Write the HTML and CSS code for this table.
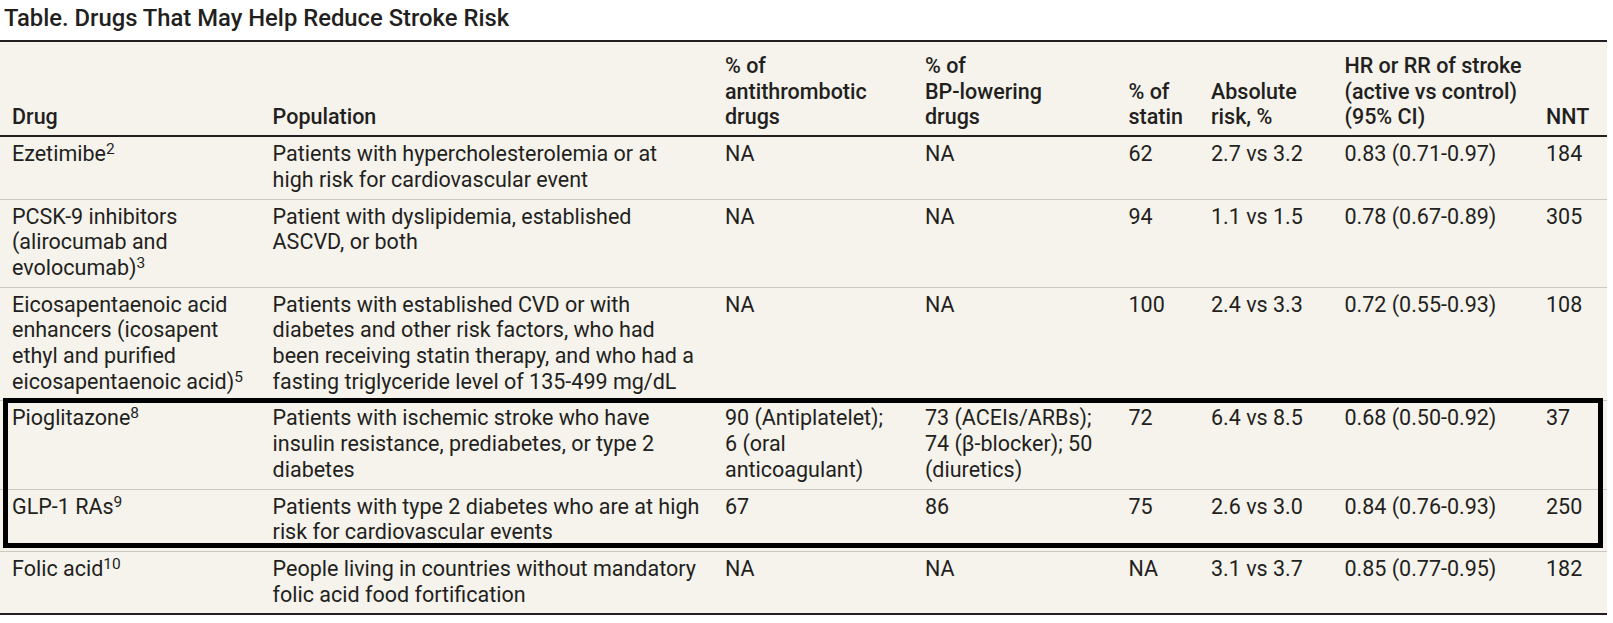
FILE: index.html
```html
<!DOCTYPE html>
<html lang="en">
<head>
<meta charset="utf-8">
<title>Table. Drugs That May Help Reduce Stroke Risk</title>
<link rel="stylesheet" href="styles.css">
</head>
<body>
<div class="figure">
  <h1 class="caption">Table. Drugs That May Help Reduce Stroke Risk</h1>
  <div class="table-wrap">
    <table class="drugs">
      <colgroup>
        <col class="c-drug"><col class="c-pop"><col class="c-anti"><col class="c-bp"><col class="c-statin"><col class="c-abs"><col class="c-hr"><col class="c-nnt">
      </colgroup>
      <thead>
        <tr>
          <th>Drug</th>
          <th>Population</th>
          <th>% of<br>antithrombotic<br>drugs</th>
          <th>% of<br>BP-lowering<br>drugs</th>
          <th>% of<br>statin</th>
          <th>Absolute<br>risk, %</th>
          <th>HR or RR of stroke<br>(active vs control)<br>(95% CI)</th>
          <th>NNT</th>
        </tr>
      </thead>
      <tbody>
        <tr>
          <td>Ezetimibe<sup>2</sup></td>
          <td>Patients with hypercholesterolemia or at<br>high risk for cardiovascular event</td>
          <td>NA</td>
          <td>NA</td>
          <td>62</td>
          <td>2.7 vs 3.2</td>
          <td>0.83 (0.71-0.97)</td>
          <td>184</td>
        </tr>
        <tr>
          <td>PCSK-9 inhibitors<br>(alirocumab and<br>evolocumab)<sup>3</sup></td>
          <td>Patient with dyslipidemia, established<br>ASCVD, or both</td>
          <td>NA</td>
          <td>NA</td>
          <td>94</td>
          <td>1.1 vs 1.5</td>
          <td>0.78 (0.67-0.89)</td>
          <td>305</td>
        </tr>
        <tr>
          <td>Eicosapentaenoic acid<br>enhancers (icosapent<br>ethyl and purified<br>eicosapentaenoic acid)<sup>5</sup></td>
          <td>Patients with established CVD or with<br>diabetes and other risk factors, who had<br>been receiving statin therapy, and who had a<br>fasting triglyceride level of 135-499 mg/dL</td>
          <td>NA</td>
          <td>NA</td>
          <td>100</td>
          <td>2.4 vs 3.3</td>
          <td>0.72 (0.55-0.93)</td>
          <td>108</td>
        </tr>
        <tr>
          <td>Pioglitazone<sup>8</sup></td>
          <td>Patients with ischemic stroke who have<br>insulin resistance, prediabetes, or type 2<br>diabetes</td>
          <td>90 (Antiplatelet);<br>6 (oral<br>anticoagulant)</td>
          <td>73 (ACEIs/ARBs);<br>74 (β-blocker); 50<br>(diuretics)</td>
          <td>72</td>
          <td>6.4 vs 8.5</td>
          <td>0.68 (0.50-0.92)</td>
          <td>37</td>
        </tr>
        <tr>
          <td>GLP-1 RAs<sup>9</sup></td>
          <td>Patients with type 2 diabetes who are at high<br>risk for cardiovascular events</td>
          <td>67</td>
          <td>86</td>
          <td>75</td>
          <td>2.6 vs 3.0</td>
          <td>0.84 (0.76-0.93)</td>
          <td>250</td>
        </tr>
        <tr>
          <td>Folic acid<sup>10</sup></td>
          <td>People living in countries without mandatory<br>folic acid food fortification</td>
          <td>NA</td>
          <td>NA</td>
          <td>NA</td>
          <td>3.1 vs 3.7</td>
          <td>0.85 (0.77-0.95)</td>
          <td>182</td>
        </tr>
      </tbody>
    </table>
    <div class="highlight" aria-hidden="true"></div>
  </div>
</div>
</body>
</html>
```

FILE: styles.css
```css
html, body {
  margin: 0;
  padding: 0;
  background: #ffffff;
}

body {
  font-family: Roboto, "Liberation Sans", sans-serif;
  color: #231f20;
}

.figure {
  width: 1607px;
}

.caption {
  margin: 0;
  height: 40px;
  box-sizing: border-box;
  padding: 5px 0 0 4px;
  font-size: 23.8px;
  line-height: 26px;
  font-weight: 500;
  color: #231f20;
}

.table-wrap {
  position: relative;
}

.drugs {
  width: 1607px;
  table-layout: fixed;
  border-collapse: collapse;
  background: #f5f3ec;
  font-size: 21.5px;
  line-height: 25.7px;
  border-top: 2px solid #231f20;
  border-bottom: 2px solid #231f20;
}

.c-drug { width: 260.6px; }
.c-pop { width: 452.4px; }
.c-anti { width: 200px; }
.c-bp { width: 203.5px; }
.c-statin { width: 82.5px; }
.c-abs { width: 133.5px; }
.c-hr { width: 201.5px; }
.c-nnt { width: 73px; }

.drugs th,
.drugs td {
  padding: 4px 2px 6px 12px;
  text-align: left;
  white-space: nowrap;
}

.drugs th {
  font-weight: 500;
  vertical-align: bottom;
  padding-top: 11px;
  padding-bottom: 5px;
  border-bottom: 2px solid #231f20;
}

.drugs td {
  font-weight: 400;
  vertical-align: top;
  border-bottom: 1px solid #cbc9bf;
}

.drugs tbody tr:last-child td {
  border-bottom: none;
}

.drugs sup {
  font-size: 15.5px;
  line-height: 0;
  vertical-align: 7px;
}

.highlight {
  position: absolute;
  left: 3px;
  top: 358px;
  width: 1600px;
  height: 150px;
  box-sizing: border-box;
  border: 5px solid #000000;
  pointer-events: none;
}
```
